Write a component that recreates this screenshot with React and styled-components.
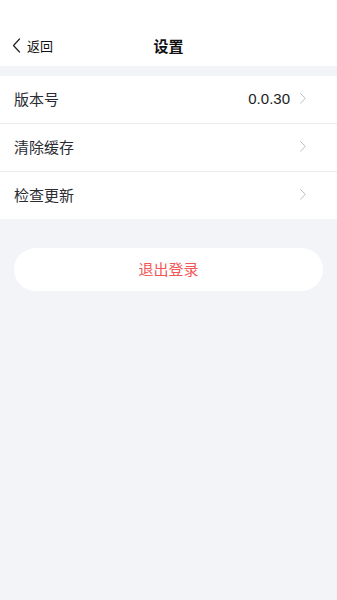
import React from 'react'
import styled, { createGlobalStyle } from 'styled-components'

const GlobalStyle = createGlobalStyle`
    html, body {
        margin: 0;
        padding: 0;
        background: #f3f4f8;
        font-family: "Noto Sans CJK SC", "Noto Sans", sans-serif;
    }
`

const Page = styled.div`
    min-height: 600px;
    background: #f3f4f8;
`

const Header = styled.div`
    background: #fff;
    padding-top: 25px;
    height: 41px;
    display: grid;
    grid-template-columns: 80px 1fr 80px;
    align-items: center;
    line-height: 1;
`

const Back = styled.div`
    display: flex;
    align-items: center;
    gap: 6px;
    padding-left: 12px;
    font-size: 13px;
    color: #111;
`

const Title = styled.div`
    text-align: center;
    font-size: 15px;
    font-weight: 700;
    color: #111;
`

const List = styled.div`
    margin-top: 10px;
    background: #fff;
`

const Row = styled.div`
    height: 47px;
    display: flex;
    align-items: center;
    padding: 0 30px 2px 14px;
    box-sizing: border-box;
    height: ${p => (p.$first ? '47px' : '48px')};
    border-top: ${p => (p.$first ? 'none' : '1px solid #ececef')};
    font-size: 15px;
    line-height: 1;
    color: #2a2b33;
`

const Label = styled.div`
    flex: 1;
`

const Value = styled.div`
    margin-right: 9px;
    font-family: "Liberation Sans", "Noto Sans", sans-serif;
    font-size: 15px;
    color: #1c1c22;
`

const Logout = styled.button`
    display: block;
    width: calc(100% - 28px);
    margin: 29px 14px 0;
    height: 43px;
    padding: 0 0 2px;
    border: none;
    border-radius: 22px;
    background: #fff;
    color: #f25656;
    font-size: 15px;
    line-height: 1;
    font-family: inherit;
`

function Chevron({ size = 8, color = '#b8b9c0', width = 1.2 }) {
    return (
        <svg width={size} height={size * 1.6} viewBox="0 0 10 16" fill="none">
            <path d="M2 2 L8 8 L2 14" stroke={color} strokeWidth={width} strokeLinecap="round" strokeLinejoin="round" />
        </svg>
    )
}

function BackArrow() {
    return (
        <svg width="9" height="15" viewBox="0 0 9 15" fill="none">
            <path d="M7.5 1 L1.5 7.5 L7.5 14" stroke="#222" strokeWidth="1.2" strokeLinecap="round" strokeLinejoin="round" />
        </svg>
    )
}

const items = [
    { label: '版本号', value: '0.0.30' },
    { label: '清除缓存' },
    { label: '检查更新' },
]

export default function App() {
    return (
        <Page>
            <GlobalStyle />
            <Header>
                <Back>
                    <BackArrow />
                    <span>返回</span>
                </Back>
                <Title>设置</Title>
                <div />
            </Header>

            <List>
                {items.map((item, i) => (
                    <Row key={item.label} $first={i === 0}>
                        <Label>{item.label}</Label>
                        {item.value && <Value>{item.value}</Value>}
                        <Chevron />
                    </Row>
                ))}
            </List>

            <Logout>退出登录</Logout>
        </Page>
    )
}
